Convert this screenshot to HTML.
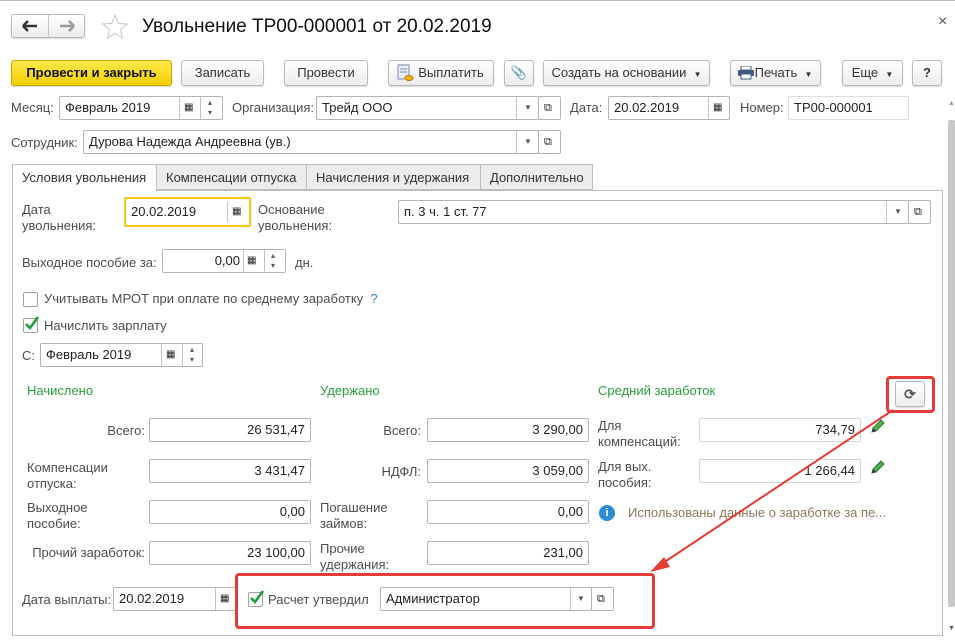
<!DOCTYPE html>
<html><head><meta charset="utf-8">
<style>
*{box-sizing:border-box;margin:0;padding:0}
body{width:955px;height:640px;background:#fff;font-family:"Liberation Sans",Arial,sans-serif;font-size:13px;color:#4d4d4d;position:relative;overflow:hidden}
.a{position:absolute}
.btn{position:absolute;height:26px;border:1px solid #b9b9b9;border-radius:3px;background:linear-gradient(#fff,#ececec);color:#333;font-size:13px;line-height:24px;text-align:center;box-shadow:0 1px 1px rgba(0,0,0,.15)}
.in{position:absolute;height:24px;border:1px solid #b4b4b4;border-radius:2px;background:#fff;color:#222;line-height:22px;padding:0 5px;white-space:nowrap}
.r{text-align:right}
.sep{position:absolute;top:0;bottom:0;border-left:1px solid #c4c4c4}
.lbl{position:absolute;white-space:nowrap;line-height:16px}
.g{color:#2a9d3c}
.cb{position:absolute;width:15px;height:15px;border:1px solid #a0a0a0;border-radius:2px;background:#fff}
.tab{position:absolute;top:164px;height:26px;border:1px solid #bdbdbd;background:#ececec;line-height:25px;padding-left:9px;color:#333}
.dd{position:absolute;font-size:8px;color:#555}
</style></head><body>
<div class="a" style="left:0;top:0;width:955px;height:2px;border-top:1px solid #bbb"></div>
<!-- nav -->
<div class="btn" style="left:11px;top:14px;width:74px;height:24px"></div>
<div class="a" style="left:48px;top:15px;height:22px;border-left:1px solid #c8c8c8"></div>
<svg class="a" style="left:22px;top:19px" width="16" height="14"><path d="M1 7H15M1 7L6 2M1 7L6 12" stroke="#333" stroke-width="2.5" fill="none"/></svg>
<svg class="a" style="left:59px;top:19px" width="16" height="14"><path d="M1 7H15M15 7L10 2M15 7L10 12" stroke="#999" stroke-width="2.5" fill="none"/></svg>
<svg class="a" style="left:102px;top:14px" width="26" height="25"><path d="M13 1L16.5 9.5L25 10L18.5 15.5L20.5 24L13 19.5L5.5 24L7.5 15.5L1 10L9.5 9.5Z" fill="none" stroke="#c8c8c8"/></svg>
<div class="a" style="left:142px;top:14px;font-size:19px;color:#111;line-height:26px">Увольнение ТР00-000001 от 20.02.2019</div>
<div class="a" style="left:938px;top:13px;font-size:16px;color:#555">×</div>
<!-- toolbar -->
<div class="btn" style="left:11px;top:60px;width:161px;background:linear-gradient(#ffe94a,#f2cf00);border-color:#c9a800;color:#111;font-weight:bold">Провести и закрыть</div>
<div class="btn" style="left:181px;top:60px;width:83px">Записать</div>
<div class="btn" style="left:284px;top:60px;width:84px">Провести</div>
<div class="btn" style="left:388px;top:60px;width:106px;padding-left:20px">Выплатить</div>
<svg class="a" style="left:396px;top:64px" width="18" height="18"><rect x="2" y="1" width="11" height="14" fill="#e8eef7" stroke="#7a8aa8"/><line x1="4" y1="5" x2="11" y2="5" stroke="#7a8aa8"/><line x1="4" y1="8" x2="11" y2="8" stroke="#7a8aa8"/><ellipse cx="13" cy="14" rx="4" ry="2.5" fill="#f0b400" stroke="#b07f00"/></svg>
<div class="btn" style="left:504px;top:60px;width:30px;color:#777">&#128206;</div>
<div class="btn" style="left:543px;top:60px;width:167px">Создать на основании &nbsp;<span style="font-size:8px">▼</span></div>
<div class="btn" style="left:730px;top:60px;width:91px;padding-left:16px">Печать &nbsp;<span style="font-size:8px">▼</span></div>
<svg class="a" style="left:738px;top:66px" width="16" height="14"><rect x="3" y="0" width="10" height="4" fill="#fff" stroke="#3c5a82"/><rect x="0" y="4" width="16" height="6" rx="1" fill="#3c5a82"/><rect x="3" y="8" width="10" height="5" fill="#fff" stroke="#3c5a82"/></svg>
<div class="btn" style="left:842px;top:60px;width:61px">Еще &nbsp;<span style="font-size:8px">▼</span></div>
<div class="btn" style="left:912px;top:60px;width:30px;font-weight:bold">?</div>
<!-- row 1 -->
<div class="lbl" style="left:11px;top:100px">Месяц:</div>
<div class="in" style="left:59px;top:96px;width:164px">Февраль 2019<div class="sep" style="left:119px"></div><div class="sep" style="left:140px"></div><span class="a" style="left:124px;top:0;font-size:10px">▦</span><span class="dd" style="left:148px;top:1px;line-height:10px">▴<br>▾</span></div>
<div class="lbl" style="left:232px;top:100px">Организация:</div>
<div class="in" style="left:316px;top:96px;width:223px">Трейд ООО<div class="sep" style="left:199px"></div><span class="dd" style="left:207px;top:0">▼</span></div>
<div class="in" style="left:538px;top:96px;width:23px;font-size:11px;padding:0 5px">⧉</div>
<div class="lbl" style="left:570px;top:100px">Дата:</div>
<div class="in" style="left:608px;top:96px;width:122px">20.02.2019<div class="sep" style="left:99px"></div><span class="a" style="left:104px;top:0;font-size:10px">▦</span></div>
<div class="lbl" style="left:740px;top:100px">Номер:</div>
<div class="in" style="left:788px;top:96px;width:121px;border-color:#ddd">ТР00-000001</div>
<!-- row 2 -->
<div class="lbl" style="left:11px;top:135px">Сотрудник:</div>
<div class="in" style="left:83px;top:130px;width:456px">Дурова Надежда Андреевна (ув.)<div class="sep" style="left:432px"></div><span class="dd" style="left:440px;top:0">▼</span></div>
<div class="in" style="left:538px;top:130px;width:23px;font-size:11px">⧉</div>
<!-- tabs -->
<div class="tab" style="left:156px;width:151px">Компенсации отпуска</div>
<div class="tab" style="left:306px;width:175px">Начисления и удержания</div>
<div class="tab" style="left:480px;width:113px">Дополнительно</div>
<div class="a" style="left:12px;top:190px;width:931px;height:446px;border:1px solid #bdbdbd;background:#fff"></div>
<div class="tab" style="left:12px;width:145px;background:#fff;border-bottom-color:#fff;height:27px">Условия увольнения</div>
<!-- panel -->
<div class="lbl" style="left:22px;top:202px">Дата<br>увольнения:</div>
<div class="in" style="left:124px;top:197px;width:127px;height:30px;border:2px solid #f5c518;line-height:26px">20.02.2019<div class="sep" style="left:101px;top:3px;bottom:3px"></div><span class="a" style="left:106px;top:0;font-size:10px">▦</span></div>
<div class="lbl" style="left:258px;top:202px">Основание<br>увольнения:</div>
<div class="in" style="left:398px;top:200px;width:511px">п. 3 ч. 1 ст. 77<div class="sep" style="left:487px"></div><span class="dd" style="left:495px;top:0">▼</span></div>
<div class="in" style="left:908px;top:200px;width:23px;font-size:11px">⧉</div>
<div class="lbl" style="left:22px;top:255px">Выходное пособие за:</div>
<div class="in r" style="left:162px;top:249px;width:124px;padding-right:45px">0,00<div class="sep" style="left:80px"></div><div class="sep" style="left:101px"></div><span class="a" style="left:84px;top:0;font-size:10px">▦</span><span class="dd" style="left:108px;top:1px;line-height:10px">▴<br>▾</span></div>
<div class="lbl" style="left:295px;top:255px">дн.</div>
<div class="cb" style="left:23px;top:292px"></div>
<div class="lbl" style="left:44px;top:291px">Учитывать МРОТ при оплате по среднему заработку <span style="color:#2f7fc1">&nbsp;?</span></div>
<div class="cb" style="left:23px;top:318px"></div><svg class="a" style="left:24px;top:315px" width="16" height="16"><path d="M2 9L6 13L14 2" stroke="#1f9e3a" stroke-width="2.6" fill="none"/></svg>
<div class="lbl" style="left:44px;top:318px">Начислить зарплату</div>
<div class="lbl" style="left:22px;top:348px">С:</div>
<div class="in" style="left:40px;top:343px;width:163px">Февраль 2019<div class="sep" style="left:120px"></div><div class="sep" style="left:141px"></div><span class="a" style="left:125px;top:0;font-size:10px">▦</span><span class="dd" style="left:149px;top:1px;line-height:10px">▴<br>▾</span></div>
<div class="lbl g" style="left:27px;top:383px">Начислено</div>
<div class="lbl g" style="left:320px;top:383px">Удержано</div>
<div class="lbl g" style="left:598px;top:383px">Средний заработок</div>
<!-- col1 -->
<div class="lbl r" style="left:27px;top:423px;width:118px">Всего:</div>
<div class="in r" style="left:149px;top:418px;width:162px">26 531,47</div>
<div class="lbl" style="left:27px;top:460px">Компенсации<br>отпуска:</div>
<div class="in r" style="left:149px;top:459px;width:162px">3 431,47</div>
<div class="lbl" style="left:27px;top:500px">Выходное<br>пособие:</div>
<div class="in r" style="left:149px;top:500px;width:162px">0,00</div>
<div class="lbl r" style="left:27px;top:545px;width:118px">Прочий заработок:</div>
<div class="in r" style="left:149px;top:541px;width:162px">23 100,00</div>
<!-- col2 -->
<div class="lbl r" style="left:320px;top:423px;width:101px">Всего:</div>
<div class="in r" style="left:427px;top:418px;width:162px">3 290,00</div>
<div class="lbl r" style="left:320px;top:464px;width:101px">НДФЛ:</div>
<div class="in r" style="left:427px;top:459px;width:162px">3 059,00</div>
<div class="lbl" style="left:320px;top:500px">Погашение<br>займов:</div>
<div class="in r" style="left:427px;top:500px;width:162px">0,00</div>
<div class="lbl" style="left:320px;top:541px">Прочие<br>удержания:</div>
<div class="in r" style="left:427px;top:541px;width:162px">231,00</div>
<!-- col3 -->
<div class="lbl" style="left:598px;top:418px">Для<br>компенсаций:</div>
<div class="in r" style="left:699px;top:418px;width:162px;border-color:#d4d4d4">734,79</div>
<svg class="a" style="left:870px;top:419px" width="15" height="15"><path d="M2 13L3 9L11 1L14 4L6 12Z" fill="#4caf50" stroke="#2e7d32"/><path d="M2 13L3 9L6 12Z" fill="#333"/></svg>
<div class="lbl" style="left:598px;top:459px">Для вых.<br>пособия:</div>
<div class="in r" style="left:699px;top:459px;width:162px;border-color:#d4d4d4">1 266,44</div>
<svg class="a" style="left:870px;top:460px" width="15" height="15"><path d="M2 13L3 9L11 1L14 4L6 12Z" fill="#4caf50" stroke="#2e7d32"/><path d="M2 13L3 9L6 12Z" fill="#333"/></svg>
<div class="a" style="left:599px;top:505px;width:16px;height:16px;border-radius:50%;background:#2c8dd0;color:#fff;font-weight:bold;font-size:11px;text-align:center;line-height:16px">i</div>
<div class="lbl" style="left:628px;top:505px;color:#8a7a5a">Использованы данные о заработке за пе...</div>
<!-- refresh -->
<div class="btn" style="left:895px;top:381px;width:30px;color:#555;font-size:14px;font-weight:bold">⟳</div>
<div class="a" style="left:886px;top:376px;width:49px;height:37px;border:3px solid #e43c37;border-radius:4px"></div>
<!-- bottom -->
<div class="lbl" style="left:22px;top:592px">Дата выплаты:</div>
<div class="in" style="left:113px;top:587px;width:124px">20.02.2019<div class="sep" style="left:101px"></div><span class="a" style="left:106px;top:0;font-size:10px">▦</span></div>
<div class="cb" style="left:248px;top:592px"></div><svg class="a" style="left:249px;top:589px" width="16" height="16"><path d="M2 9L6 13L14 2" stroke="#1f9e3a" stroke-width="2.6" fill="none"/></svg>
<div class="lbl" style="left:268px;top:592px">Расчет утвердил</div>
<div class="in" style="left:380px;top:587px;width:212px">Администратор<div class="sep" style="left:189px"></div><span class="dd" style="left:196px;top:0">▼</span></div>
<div class="in" style="left:591px;top:587px;width:23px;font-size:11px">⧉</div>
<div class="a" style="left:235px;top:573px;width:420px;height:56px;border:3px solid #e43c37;border-radius:4px"></div>
<!-- arrow -->
<svg class="a" style="left:0;top:0" width="955" height="640"><line x1="893" y1="410" x2="660" y2="565" stroke="#e43c37" stroke-width="2"/><polygon points="650,572 664,557 670,567" fill="#e43c37"/></svg>
<!-- scrollbar -->
<div class="a" style="left:948px;top:120px;width:7px;height:487px;background:#c8c8c8;border-radius:2px"></div>
<div class="a" style="left:948px;top:100px;font-size:7px;color:#999">▲</div>
<div class="a" style="left:948px;top:625px;font-size:7px;color:#555">▼</div>
</body></html>
